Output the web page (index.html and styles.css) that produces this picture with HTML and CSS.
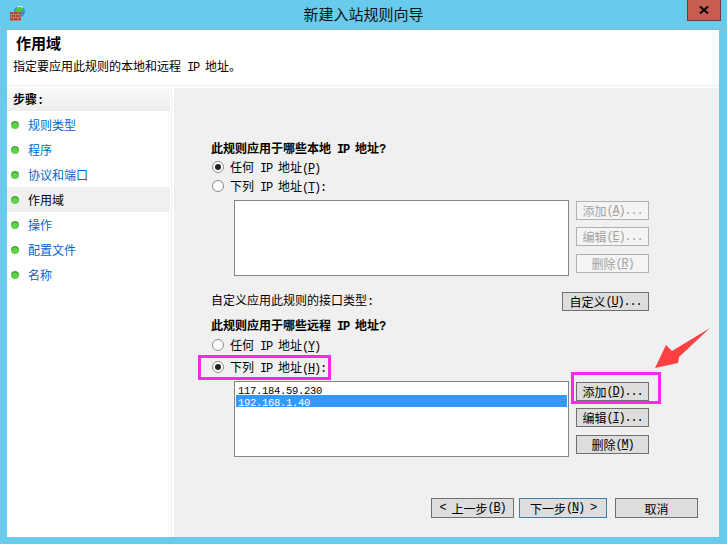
FILE: index.html
```html
<!DOCTYPE html>
<html lang="zh-CN">
<head>
<meta charset="utf-8">
<title>新建入站规则向导</title>
<link rel="stylesheet" href="styles.css">
</head>
<body>
<div class="window">
  <div class="titlebar">
    <svg class="app-icon" width="16" height="16" viewBox="0 0 16 16">
      <circle cx="9.500" cy="6.500" r="5.500" fill="#3a8fd6"/>
      <path d="M6 4c1-2.500 5-3.500 7-1.500l.5 2.500-3 1.500-1.500 1-3-1z" fill="#5fbf3f"/>
      <path d="M7.500 2c2-1 4-.8 5.500.8" stroke="#e4f5ff" fill="none"/>
      <rect x="0" y="7" width="11" height="9" fill="#a84a3a"/>
      <path d="M0 9.500h11M0 12.500h11M0 15.500h11M3.500 7v2.500M8 7v2.500M1.500 9.500v3M5.500 9.500v3M9.500 9.500v3M3.500 12.500v3M8 12.500v3" stroke="#d08a78" stroke-opacity=".75" fill="none"/>
    </svg>
    <div class="title">新建入站规则向导</div>
    <div class="close"><svg width="10" height="8" viewBox="0 0 10 8"><path d="M1 0.500 9 7.500M9 0.500 1 7.500" stroke="#000" stroke-width="2" fill="none"/></svg></div>
  </div>
  <div class="client">
    <header class="head">
      <h1 class="head-title">作用域</h1>
      <p class="head-desc">指定要应用此规则的本地和远程<span class="en"> IP </span>地址。</p>
    </header>
    <div class="body">
      <nav class="steps">
        <div class="steps-head">步骤<span class="en">:</span></div>
        <ul class="step-list">
          <li class="step"><i class="dot"></i><span>规则类型</span></li>
          <li class="step"><i class="dot"></i><span>程序</span></li>
          <li class="step"><i class="dot"></i><span>协议和端口</span></li>
          <li class="step current"><i class="dot"></i><span>作用域</span></li>
          <li class="step"><i class="dot"></i><span>操作</span></li>
          <li class="step"><i class="dot"></i><span>配置文件</span></li>
          <li class="step"><i class="dot"></i><span>名称</span></li>
        </ul>
      </nav>
      <main class="pane">
        <div class="form">
          <h2 class="q">此规则应用于哪些本地<span class="en"> IP </span>地址<span class="en">?</span></h2>
          <div class="radio-row"><i class="radio on"></i><span>任何<span class="en"> IP </span>地址<span class="en">(<u>P</u>)</span></span></div>
          <div class="radio-row"><i class="radio"></i><span>下列<span class="en"> IP </span>地址<span class="en">(<u>T</u>):</span></span></div>
          <div class="ip-block first">
            <div class="listbox"></div>
            <div class="btns">
              <div class="btn off">添加<span class="en">(<u>A</u>)...</span></div>
              <div class="btn off">编辑<span class="en">(<u>E</u>)...</span></div>
              <div class="btn off">删除<span class="en">(<u>R</u>)</span></div>
            </div>
          </div>
          <div class="custom-row">
            <span class="custom-label">自定义应用此规则的接口类型<span class="en">:</span></span>
            <div class="btn wide">自定义<span class="en">(<u>U</u>)...</span></div>
          </div>
          <h2 class="q second">此规则应用于哪些远程<span class="en"> IP </span>地址<span class="en">?</span></h2>
          <div class="radio-row"><i class="radio"></i><span>任何<span class="en"> IP </span>地址<span class="en">(<u>Y</u>)</span></span></div>
          <div class="radio-row lower"><i class="radio on"></i><span>下列<span class="en"> IP </span>地址<span class="en">(<u>H</u>):</span></span></div>
          <div class="ip-block last">
            <div class="listbox">
              <div class="ip-item"><span class="en">117.184.59.230</span></div>
              <div class="ip-item sel"><span class="en">192.168.1.40</span></div>
            </div>
            <div class="btns">
              <div class="btn">添加<span class="en">(<u>D</u>)...</span></div>
              <div class="btn">编辑<span class="en">(<u>I</u>)...</span></div>
              <div class="btn">删除<span class="en">(<u>M</u>)</span></div>
            </div>
          </div>
        </div>
        <div class="footer">
          <div class="btn nav"><span class="en">&lt; </span>上一步<span class="en">(<u>B</u>)</span></div>
          <div class="btn nav next">下一步<span class="en">(<u>N</u>) &gt;</span></div>
          <div class="btn nav cancel">取消</div>
        </div>
      </main>
    </div>
  </div>
  <div class="mark mark-radio"></div>
  <div class="mark mark-add"></div>
  <svg class="arrow" width="60" height="45" viewBox="0 0 60 45">
    <polygon points="1,41 12,18 18,24 56,1 25,30 24,36" fill="#ff4040"/>
  </svg>
</div>
</body>
</html>
```

FILE: styles.css
```css
* { box-sizing: border-box; }
html, body { margin: 0; padding: 0; }
body { width: 727px; height: 544px; overflow: hidden; font-family: "Noto Sans CJK SC", sans-serif; font-size: 12px; color: #000; }
.window { position: relative; width: 727px; height: 544px; background: #69cbec; display: flex; flex-direction: column; }
.en { font-family: "Liberation Mono", monospace; font-size: 12px; letter-spacing: -1.2px; line-height: 0; white-space: pre; font-weight: 400; }
.q .en, .steps-head .en { font-weight: 700; }

.titlebar { height: 30px; flex: none; display: grid; grid-template-columns: 1fr auto 1fr; align-items: start; border-bottom: 1px solid #8fb6c4; }
.app-icon { margin: 5px 0 0 10px; }
.title { font-size: 15px; line-height: 20px; margin-top: 4px; color: #111; }
.close { justify-self: end; width: 34px; height: 21px; margin-right: 6px; background: #c75c50; border: 1px solid #74393a; border-top: 0; display: flex; align-items: center; justify-content: center; }

.client { flex: 1; margin: 0 8px 7px 7px; background: #fff; display: flex; flex-direction: column; min-height: 0; }
.head { height: 56px; flex: none; padding: 3px 0 0 6px; border-bottom: 1px solid #eee; margin-bottom: 2px; }
.head-title { margin: 0 0 0 3px; font-size: 15px; line-height: 20px; font-weight: 700; }
.head-desc { margin: 7px 0 0; line-height: 12px; }

.body { flex: 1; display: flex; min-height: 0; }
.steps { width: 164px; flex: none; padding-right: 1px; box-shadow: 1px 0 0 #f0f0f0; margin-right: 3px; }
.steps-head { height: 23px; line-height: 22px; padding-left: 6px; font-weight: 700; background: linear-gradient(#fafafa, #ececec); }
.step-list { list-style: none; margin: 1px 0 0; padding: 0; }
.step { height: 25px; display: flex; align-items: center; gap: 9px; padding-left: 4px; color: #0066cc; }
.step.current { color: #000; background: #f0f0f0; }
.dot { width: 8px; height: 8px; border-radius: 50%; background: radial-gradient(circle at 50% 70%, #5fd24a 0 45%, #3ea32e 70%, #8fb88a 100%); }

.pane { flex: 1; background: #f0f0f0; display: flex; flex-direction: column; min-width: 0; }
.form { width: 475px; padding: 53px 0 0 37px; }
.q { margin: 0; font-size: 12px; line-height: 14px; font-weight: 700; }
.q.second { margin-top: 7px; }
.radio-row { height: 19px; margin-top: 2px; display: flex; align-items: center; gap: 6px; padding-left: 1px; line-height: 19px; }
.radio-row + .radio-row { margin-top: 0; }
.q.second + .radio-row { margin-top: 3px; }
.radio-row.lower { margin-top: 3px; }
.radio { width: 12px; height: 12px; border-radius: 50%; border: 1px solid #8a8a8a; background: #fff; display: flex; align-items: center; justify-content: center; }
.radio.on::after { content: ""; width: 6px; height: 6px; border-radius: 50%; background: #222; }

.ip-block { display: flex; gap: 7px; margin-left: 23px; }
.ip-block.first { margin-top: 5px; }
.ip-block.last { margin-top: 5px; }
.listbox { width: 335px; height: 76px; flex: none; background: #fff; border: 1px solid #82878c; padding: 1px; }
.ip-item { height: 12px; line-height: 12px; padding-left: 2px; }
.ip-item .en { font-size: 10.500px; letter-spacing: -0.300px; }
.ip-item.sel { background: #3399ff; color: #fff; }

.btns { display: flex; flex-direction: column; gap: 7px; padding-top: 1px; }
.btns .btn:last-child { margin-top: 1px; }
.btn { width: 73px; height: 19px; background: #dddddd; border: 1px solid #707070; display: flex; align-items: center; justify-content: center; line-height: 17px; white-space: pre; }
.btn.off { background: #f4f4f4; border-color: #adb2b5; color: #a3a3a3; }
.btn.wide { width: 87px; }
.custom-row { display: flex; align-items: center; justify-content: space-between; height: 19px; margin-top: 16px; }
.custom-label { line-height: 14px; padding-bottom: 3px; }

.footer { margin-top: auto; padding: 0 21px 19px 0; display: flex; justify-content: flex-end; gap: 5px; }
.btn.nav { width: 83px; height: 20px; }
.btn.next { width: 88px; border-color: #3c7fb1; }
.btn.cancel { margin-left: 3px; }

.mark { position: absolute; border: 3px solid #f928f0; }
.mark-radio { left: 198px; top: 355px; width: 133px; height: 25px; }
.mark-add { left: 571px; top: 372px; width: 90px; height: 32px; }
.arrow { position: absolute; left: 654px; top: 327px; }
```
